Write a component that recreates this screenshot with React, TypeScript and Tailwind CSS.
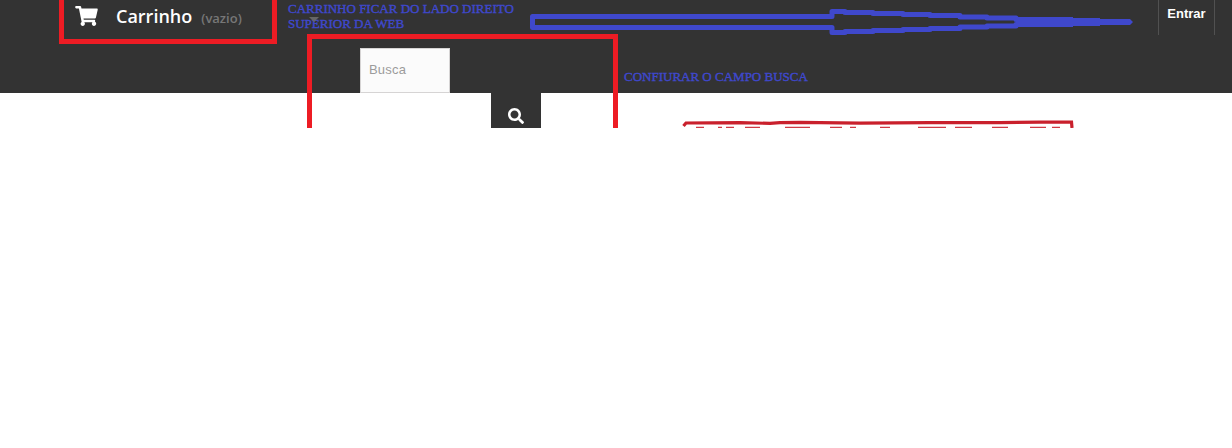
import { FaSearch, FaShoppingCart } from 'react-icons/fa';

const arrowTop = [
  [532.5, 16.5], [832, 16.5], [832, 11.5], [845, 11.5], [845, 12.5], [873, 12.5], [873, 13.5], [903, 13.5],
  [903, 14.5], [930, 14.5], [930, 15.5], [960, 15.5], [960, 17], [987, 17], [987, 18], [1016, 18], [1016, 19.5], [1045, 19.5],
];

const arrowOutline = [...arrowTop, ...[...arrowTop].reverse().map(([x, y]) => [x, 44 - y])]
  .map(([x, y]) => `${x},${y}`)
  .join(' ');

const Arrow = () => (
  <svg className="absolute left-[525px] top-[5px]" width="615" height="35" viewBox="525 5 615 35">
    <polygon points={arrowOutline} fill="none" stroke="#3f48cc" strokeWidth="5" strokeLinejoin="round" />
    <polygon points="1045,17 1073,17 1073,18 1100,18 1100,19 1130,19 1133,22 1130,25 1100,25 1100,26 1073,26 1073,27 1045,27" fill="#3f48cc" />
  </svg>
);

const SketchBox = () => (
  <svg className="absolute left-[680px] top-[118px]" width="396" height="10" viewBox="680 118 396 10">
    <path
      d="M683.5 126 L686 123 L740 122.6 L770 123.4 L780 122.6 L800 122.4 L860 123.2 L930 122.6 L1000 122.6 L1040 122.2 L1071.5 122 L1072 128"
      fill="none"
      stroke="#c9202c"
      strokeWidth="3.2"
    />
    <path
      d="M696 127.5 H704 M718 127.5 H722 M726 127.5 H734 M745 127.5 H760 M785 127.5 H810 M830 127.5 H842 M850 127.5 H856 M880 127.5 H890 M918 127.5 H946 M955 127.5 H972 M992 127.5 H1008 M1030 127.5 H1046 M1052 127.5 H1060"
      fill="none"
      stroke="#cf3a44"
      strokeWidth="1.5"
    />
  </svg>
);

export default function App() {
  return (
    <div className="relative h-[448px] overflow-hidden bg-white">
      <header className="flex h-[93px] items-start bg-[#333333]">
        <a className="ml-[59px] flex h-[44px] w-[218px] items-center border-x-[5px] border-b-[5px] border-[#ed1c24] pb-[8px] pl-[11px] font-['Open_Sans',sans-serif]">
          <FaShoppingCart className="h-[20px] w-[23px] text-white" />
          <span className="ml-[18px] mt-[2px] text-[18px] font-semibold text-white">Carrinho</span>
          <span className="ml-[9px] mt-[6px] text-[13px] font-semibold text-[#777777]">(vazio)</span>
        </a>

        <input
          placeholder="Busca"
          className="ml-[83px] mt-[48px] h-[45px] w-[90px] border border-[#d6d4d4] bg-[#fbfbfb] px-[8px] pb-[3px] font-['Liberation_Sans',sans-serif] text-[13px] tracking-[0.2px] text-[#9c9b9b] placeholder:text-[#9c9b9b]"
        />

        <a className="ml-auto mr-[17px] flex h-[35px] w-[57px] items-center justify-center border-x border-[#515151] pb-[8px] font-['Liberation_Sans',sans-serif] text-[13px] font-bold text-white">
          Entrar
        </a>
      </header>

      <button className="ml-[491px] flex h-[35px] w-[50px] items-center justify-center bg-[#333333] pt-[10px] text-white">
        <FaSearch className="h-[16px] w-[16px]" />
      </button>

      {/* marcas feitas por cima da captura */}
      <div className="absolute left-[307px] top-[34px] h-[94px] w-[311px] border-x-[5px] border-t-[5px] border-[#ed1c24]" />
      <Arrow />
      <SketchBox />

      <p className="absolute left-[288px] top-[1px] font-['Liberation_Serif',serif] text-[13px] leading-[15px] whitespace-nowrap text-[#3f48cc] [-webkit-text-stroke:0.4px_#3f48cc]">
        CARRINHO FICAR DO LADO DIREITO
        <br />
        SUPERIOR DA WEB
      </p>
      <span className="absolute left-[309px] top-[17px] h-0 w-0 border-x-[5px] border-t-[5px] border-x-transparent border-t-[#666666]" />
      <p className="absolute left-[624px] top-[69px] font-['Liberation_Serif',serif] text-[13px] leading-[15px] text-[#3f48cc] [-webkit-text-stroke:0.4px_#3f48cc]">
        CONFIURAR O CAMPO BUSCA
      </p>
    </div>
  );
}
